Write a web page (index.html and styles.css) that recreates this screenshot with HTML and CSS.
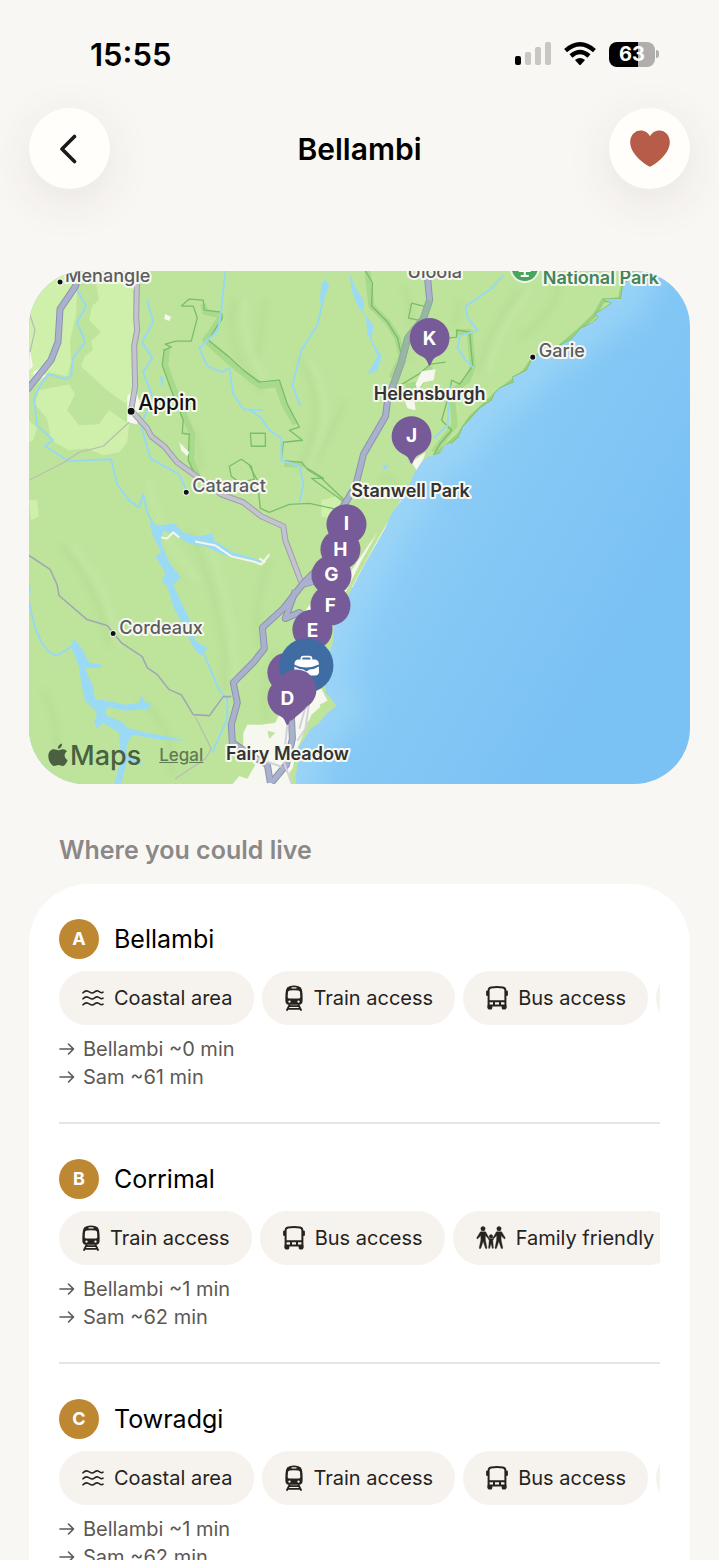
FILE: index.html
```html
<!DOCTYPE html>
<html lang="en">
<head>
    <meta charset="UTF-8">
    <meta name="viewport" content="width=device-width, initial-scale=1.0">
    <title>Bellambi</title>
    <link rel="stylesheet" href="styles.css">
</head>
<body>

    <svg class="sprite" aria-hidden="true">
        <symbol id="icon-waves" viewBox="0 0 22 18">
            <g fill="none" stroke="currentColor" stroke-width="1.6" stroke-linecap="round">
                <path d="M1 3.800 Q3.500 1.200 6 2.200 C8 3 9 4.600 11 3.800 C13 3 13.500 1.200 16 2 C18 2.800 19 4.800 21 3.200"/>
                <path d="M1 9.800 Q3.500 7.200 6 8.200 C8 9 9 10.600 11 9.800 C13 9 13.500 7.200 16 8 C18 8.800 19 10.800 21 9.200"/>
                <path d="M1 15.800 Q3.500 13.200 6 14.200 C8 15 9 16.600 11 15.800 C13 15 13.500 13.200 16 14 C18 14.800 19 16.800 21 15.200"/>
            </g>
        </symbol>
        <symbol id="icon-train" viewBox="0 0 18 26">
            <path fill="currentColor" fill-rule="evenodd" d="M4.5 1.200 Q9 -.2 13.500 1.200 Q16.500 2 17 5 Q17.800 9 17.600 16 Q17.500 19.600 14 19.800 H4 Q.5 19.600 .4 16 Q.2 9 1 5 Q1.500 2 4.500 1.200Z M6.500 2.200 V3.500 H11.500 V2.200Z M4.800 5.400 Q3.200 5.500 3 7 L2.700 12 Q2.700 13.400 4 13.400 H14 Q15.300 13.400 15.300 12 L15 7 Q14.800 5.500 13.200 5.400 Q9 4.900 4.800 5.400Z M4.500 15.400 A1.200 1.200 0 1 0 4.500 17.800 A1.200 1.200 0 1 0 4.500 15.400Z M13.500 15.400 A1.200 1.200 0 1 0 13.500 17.800 A1.200 1.200 0 1 0 13.500 15.400Z"/>
            <path fill="none" stroke="currentColor" stroke-width="1.8" stroke-linecap="round" d="M4.500 20 L2 25 M13.500 20 L16 25 M4 21.200 H14 M3 23.800 H15"/>
        </symbol>
        <symbol id="icon-bus" viewBox="0 0 22 24">
            <path fill="none" stroke="currentColor" stroke-width="2" d="M2.600 22 V4.500 Q2.600 1.800 5 1.400 Q11 .6 17 1.400 Q19.400 1.800 19.400 4.500 V22 M2.600 15.300 H19.400 M2.600 19.400 H19.400"/>
            <path fill="none" stroke="currentColor" stroke-width="2.2" stroke-linecap="round" d="M1.200 5.500 V9 M20.800 5.500 V9"/>
            <path fill="currentColor" d="M1.600 19 H6.300 V22 Q6.300 23.400 5 23.400 H3 Q1.600 23.400 1.600 22Z M20.400 19 H15.700 V22 Q15.700 23.400 17 23.400 H19 Q20.400 23.400 20.400 22Z M7 15.500 H9 V19 H7Z M13 15.500 H15 V19 H13Z"/>
        </symbol>
        <symbol id="icon-family" viewBox="0 0 30 24">
            <g fill="currentColor" stroke="currentColor" stroke-width=".4">
                <circle cx="7" cy="2.700" r="2.200"/>
                <circle cx="23" cy="2.700" r="2.200"/>
                <circle cx="15" cy="10.400" r="1.800"/>
                <path d="M4.400 5.800 H9.600 L12.600 11.200 L11.800 12 L9.300 9.400 L9.400 14 L11 22 Q10.600 23.300 9.500 22.300 L7.200 15.300 L4.800 22.300 Q3.600 23.200 3.200 22 L4.900 14 L4.800 9.600 L1.800 12.800 Q.6 13 .8 11.800Z"/>
                <path d="M25.600 5.800 H20.400 L17.400 11.200 L18.200 12 L20.700 9.400 L20.600 14 L19 22 Q19.400 23.300 20.500 22.300 L22.800 15.300 L25.200 22.300 Q26.400 23.200 26.800 22 L25.100 14 L25.200 9.600 L28.200 12.800 Q29.400 13 29.200 11.800Z"/>
                <path d="M12.400 11 L13.800 12.800 H16.200 L17.600 11 L18.200 11.800 L16.800 14.600 L17.400 22 Q16.900 23 16.300 22.200 L15 17.600 L13.700 22.200 Q13 23 12.600 22 L13.200 14.600 L11.800 11.800Z"/>
            </g>
        </symbol>
        <symbol id="icon-arrow" viewBox="0 0 16 14">
            <path fill="none" stroke="currentColor" stroke-width="1.6" stroke-linecap="round" stroke-linejoin="round" d="M1 7 H14.500 M9.500 2 L14.500 7 L9.500 12"/>
        </symbol>
        <symbol id="pin" viewBox="0 0 40 48" overflow="visible">
            <path d="M20 0 A20 20 0 0 1 27 38.700 Q23.500 40 21.200 46.400 Q20 48.400 18.800 46.400 Q16.500 40 13 38.700 A20 20 0 0 1 20 0Z"/>
        </symbol>
    </svg>

    <div class="screen">
        <div class="status-bar">
            <span class="time">15:55</span>
            <div class="status-icons">
                <svg class="signal" viewBox="0 0 36 24">
                    <rect x="0" y="14" width="6" height="9" rx="2"/>
                    <g fill="#c9c7c4">
                        <rect x="10" y="10" width="6" height="13" rx="2"/>
                        <rect x="20" y="5" width="6" height="18" rx="2"/>
                        <rect x="30" y="0" width="6" height="23" rx="2"/>
                    </g>
                </svg>
                <svg class="wifi" viewBox="0 0 32 24">
                    <g fill="none" stroke="#000" stroke-width="4.4">
                        <path d="M1.600 8.600 Q16 -4 30.400 8.600"/>
                        <path d="M7 14 Q16 6 25 14"/>
                    </g>
                    <path d="M11 18 Q16 14 21 18 L17 22.400 Q16 23.400 15 22.400Z"/>
                </svg>
                <div class="battery">
                    <span class="battery-level">63</span>
                    <span class="battery-cap"></span>
                </div>
            </div>
        </div>

        <header class="nav">
            <button class="round-btn" aria-label="Back">
                <svg class="chevron" viewBox="0 0 18 30"><path fill="none" stroke="#1a1a1a" stroke-width="3.6" stroke-linecap="round" stroke-linejoin="round" d="M15.500 2.500 L3 15 L15.500 27.500"/></svg>
            </button>
            <h1 class="nav-title">Bellambi</h1>
            <button class="round-btn" aria-label="Remove from favourites">
                <svg class="heart" viewBox="0 0 40 37"><path fill="#b65c48" d="M20 36.600 C18.500 36.600 .2 25.500 .2 12.200 C.2 5.200 4.800 .4 10.600 .4 C15 .4 18.200 2.800 20 6.200 C21.800 2.800 25 .4 29.400 .4 C35.200 .4 39.800 5.200 39.800 12.200 C39.800 25.500 21.500 36.600 20 36.600Z"/></svg>
            </button>
        </header>

        <main>
            <section class="map" aria-label="Map">
                <svg class="map-canvas" viewBox="30 271 660 512" preserveAspectRatio="xMidYMid slice">
                    <defs>
                        <linearGradient id="sea" gradientUnits="userSpaceOnUse" x1="400" y1="480" x2="640" y2="620">
                            <stop offset="0" stop-color="#90cff7"/>
                            <stop offset="0.4" stop-color="#84c8f5"/>
                            <stop offset="1" stop-color="#7ac1f4"/>
                        </linearGradient>
                        <filter id="soft" x="-20%" y="-20%" width="140%" height="140%"><feGaussianBlur stdDeviation="14"/></filter>
                        <filter id="relief" x="-20%" y="-20%" width="140%" height="140%"><feGaussianBlur stdDeviation="3"/></filter>
                        <path id="land" d="M20 260 H640 L634 275 L623 285 L621 299 L603 299 L612 303 L602 310 L595 314 L599 317 L592 323 L580 329 L572 339 L557 347 L542 352 L533 357 L527 370 L513 377 L514 382 L500 388 L495 393 L492 400 L480 408 L472 417 L463 427 L459 437 L452 443 L445 445 L440 453 L427 457 L420 465 L414 474 L408 489 L402 500 L392 513 L386 527 L377 543 L366 562 L353 587 L344 605 L335 622 L334 640 L328 660 L325 680 L326 692 L331 697 L337 705 L326 714 L320 722 L311 728 L304 740 L298 748 L299 760 L296 777 L298 790 H20Z"/>
                        <clipPath id="land-clip"><use href="#land"/></clipPath>
                    </defs>

                    <rect x="20" y="260" width="690" height="540" fill="url(#sea)"/>
                    <use href="#land" fill="none" stroke="#a2d8f7" stroke-width="44" opacity="0.65" filter="url(#soft)"/>
                    <use href="#land" fill="#bee49c"/>

                    <g clip-path="url(#land-clip)">
                        <!-- farmland -->
                        <g fill="#cff0aa">
                            <path d="M20 260 H84 L78 290 L77 315 L71 340 L72 362 L68 376 L50 372 L32 390 H20Z"/>
                            <path d="M96 278 L133 276 L136 360 L132 400 L126 403 L108 390 L95 378 L82 366 L86 356 L94 350 L92 341 L102 332 L90 320 L93 306 L100 300Z"/>
                            <path d="M40 390 L70 384 L76 394 L68 410 L80 425 L100 424 L110 410 L124 420 L130 424 L128 442 L120 452 L104 455 L88 448 L70 450 L52 440 L48 418 L36 404Z"/>
                            <path d="M30 420 L38 428 L34 440 L30 442Z"/>
                            <path d="M30 500 L38 500 L40 516 L32 520Z"/>
                            <path d="M322 500 L337 496 L345 508 L335 520 L322 516Z"/>
                        </g>

                        <!-- terrain relief -->
                        <g fill="none" stroke="#abd389" stroke-width="4" opacity="0.45" filter="url(#relief)">
                            <path d="M62 545 Q96 580 110 645 M190 530 Q230 620 225 690 M270 560 Q250 610 262 650 M140 700 Q176 720 172 776 M44 690 Q60 720 58 750"/>
                            <path d="M236 300 Q220 340 262 392 M300 360 Q332 410 298 470 M345 400 Q330 440 312 464 M404 286 Q420 330 408 360 M520 290 Q488 330 478 372 M560 280 Q555 315 520 338"/>
                            <path d="M184 420 Q205 440 200 470 M266 300 L258 356 M276 650 Q258 700 268 720 M460 300 L455 326 M380 480 Q400 470 395 500"/>
                        </g>
                        <g fill="none" stroke="#cdecae" stroke-width="4" opacity="0.5" filter="url(#relief)">
                            <path d="M72 545 Q106 580 120 645 M205 530 Q240 620 235 690 M246 300 Q240 340 272 392 M310 360 Q342 410 308 470 M530 290 Q498 330 488 372 M150 480 Q160 540 200 580"/>
                        </g>

                        <!-- national park borders -->
                        <g fill="none" stroke-linejoin="round">
                            <g stroke="#a9d98b" stroke-width="6">
                                <path d="M204 304 L206 312 L221 315 L220 320 L206 340 L228 360 L244 373 L260 384"/>
                                <path d="M168 349 L166 365 L175 390 L187 420 L193 434 L192 460 L198 475"/>
                                <path d="M250 378 L262 386 L278 384 L285 404 L296 424 M285 464 L304 464"/>
                                <path d="M368 271 L372 306 L388 322 L398 338 L402 356 L392 378 M431 366 L420 384 L406 386 M456 332 L470 332 L473 366 L468 380 L452 392 L455 425 L434 452"/>
                            </g>
                            <g stroke="#79bd6b" stroke-width="1.3">
                                <path d="M182 306 L190 299 L204 300 L205 310 L222 312 L223 318 L209 340 L230 357 L244 370 L260 382 L280 380 L288 404 L300 427 L290 430 L303 440 L284 442 L282 460 L302 462 L309 470 L322 478 L345 500 M182 306 L194 306 L198 318 L192 341 L177 341 L166 344 L172 347 L165 350"/>
                                <path d="M165 349 L163 365 L172 390 L184 420 L183 433 L190 434 L189 460 L196 475"/>
                                <path d="M250 465 L258 480 L261 508 L270 512 L290 504 L310 503 L342 510"/>
                                <path d="M366 271 L373 283 L372 306 L388 322 L398 338 L402 356 M412 303 L428 307 M412 303 L409 318 L424 321"/>
                                <path d="M448 338 L457 337 L457 330 L470 332 L473 366 L460 384 L452 380 L450 392 L442 420 L452 430 L440 444 L434 455 M396 388 L419 374 L431 364 L446 362"/>
                                <path d="M251 433 H266 V446 H252Z M230 466 L242 459 L252 466 L255 479 L240 482 L232 476Z"/>
                                <path d="M308 468 L324 478 L312 478 L345 502"/>
                            </g>
                            <path stroke="#9bd080" stroke-width="4" d="M635 271 L623 285 L620 299 L603 301 L595 315 L578 331 L557 349 L533 359 L524 372 L500 390 L470 418 L459 435 L436 455"/>
                            <path stroke="#72bd6a" stroke-width="1.2" d="M634 275 L623 285 L621 299 L603 299 L612 303 L602 310 L595 314 L599 317 L592 323 L580 329 L572 339 L557 347 L542 352 L533 357 L527 370 L513 377 L514 382 L500 388 L495 393 L492 400 L480 408 L472 417 L463 427 L459 437 L452 443 L440 453 L434 455"/>
                        </g>

                        <!-- towns -->
                        <g fill="#f6f7ef">
                            <path d="M128 396 L136 388 L140 400 L138 424 L128 422Z M129 282 H136 V292Z M31 350 L34 366 L30 370Z M34 372 L44 366 L46 376 L36 382Z M166 314 L172 317 L170 321 L165 319Z M180 442 L190 452 L188 456 L182 450Z"/>
                            <path d="M422 371 L436 369 L434 380 L424 382 L418 390 L416 384Z M404 398 L414 394 L416 410 L408 408Z M412 462 L426 452 L424 458 L417 470Z"/>
                            <path d="M378 532 L362 560 L346 592 L340 590 L352 570 L368 546Z M306 610 L312 602 L314 612Z"/>
                            <path d="M244 732 L248 724 L262 724 L276 722 L286 700 L322 688 L328 700 L312 714 L302 738 L296 752 L290 790 H228 L236 780 L250 764 L244 750Z"/>
                        </g>
                        <g fill="#bee49c">
                            <path d="M268 730 L276 732 L270 738Z M308 720 L314 724 L306 730Z M230 772 L244 754 L256 764 L248 778Z M290 772 L296 764 L294 782 L290 780Z"/>
                            <path d="M320 704 L328 700 L334 706 L324 712Z"/>
                        </g>

                        <!-- rivers and reservoirs -->
                        <g fill="none" stroke="#98d9f1" stroke-width="2" stroke-linejoin="round">
                            <path d="M78 290 L87 306 L78 322 L86 342 L74 358 L72 376 L66 379 L50 374 L42 384 L35 398 L38 425 L54 440 L46 446 L70 461 L112 459 L118 484 L130 500 L140 507 L144 494 L148 512 L154 524"/>
                            <path d="M148 300 L154 322 L143 342 L153 358 L144 372 L153 396 L142 425 L151 458 L180 474 L187 490"/>
                            <path d="M226 271 L222 310 L219 330 L200 348 L208 366 L222 372 L230 368 L234 394 L244 409 L264 410"/>
                            <path d="M326 290 L318 325 L302 350 L293 385 L301 406"/>
                            <path d="M250 409 L262 418 L270 430 L282 438 L282 460 L300 466 L304 484 L300 502"/>
                            <path d="M504 275 L490 290 L466 306 L468 318 L478 330 L460 336 L458 348 L466 360 L474 368 M434 438 L448 425 L450 385"/>
                            <path d="M30 600 Q38 650 58 655 L74 645 M204 652 L220 690 L228 698 L228 718 L213 752"/>
                        </g>
                        <g fill="#9bdaf4">
                            <path d="M150 522 L160 525 L175 523 L184 532 L198 536 L213 533 L215 540 L234 552 L262 560 L258 563 L226 555 L206 546 L190 543 L174 534 L164 530 L162 542 L170 562 L182 577 L174 584 L182 602 L190 618 L196 640 L208 648 L202 655 L196 650 L186 630 L174 606 L168 586 L163 582 L166 572 L156 556 L162 552 L154 536Z"/>
                            <path d="M75 638 L84 650 L90 662 L102 664 L102 667 L86 668 L94 686 L96 698 L108 700 L126 704 L140 702 L142 694 L146 702 L152 702 L150 708 L126 710 L108 706 L106 714 L124 722 L128 727 L148 732 L176 737 L186 740 L160 739 L134 734 L128 742 L127 752 L146 765 L128 760 L122 783 L115 783 L122 760 L120 732 L104 722 L98 728 L95 722 L98 712 L86 700 L82 682 L80 666 L72 646Z"/>
                            <path d="M332 271 L326 280 L330 286 L325 298 L320 304 L322 284Z M350 272 L356 288 L364 300 L364 312 L374 326 L372 340 L382 356 L378 370 L368 374 L378 356 L368 334 L366 316 L358 306 L352 290Z"/>
                            <path d="M382 466 L390 464 L386 470Z M30 575 L32 592 L30 594Z M160 374 L165 378 L163 388Z"/>
                        </g>
                        <path fill="none" stroke="#f6f5ea" stroke-width="2" d="M162 537 L168 538 L174 532 L180 537 M196 541 L216 545 L232 556 L254 561 L262 564 L270 554 M260 558 L266 562"/>
                        <path fill="none" stroke="#f3f3ec" stroke-width="1.6" d="M402 500 L386 527 L377 543 L353 587"/>
                    </g>

                    <!-- roads -->
                    <g fill="none" stroke-linejoin="round">
                        <g stroke="#b6bcb4" stroke-width="1.2">
                            <path d="M30 312 L36 330 L31 352 M30 480 L65 462 L80 452 L104 446 L130 422"/>
                            <path d="M196 716 L212 748 L206 758 L176 778"/>
                        </g>
                        <path stroke="#a2a7b4" stroke-width="1.6" d="M30 555 L51 569 L58 584 L60 595 L88 619 L108 625 L122 642 L143 656 L148 667 L158 674 L170 689 L182 694 L194 714 L210 715 L224 696 H232"/>
                        <path id="appin-road" stroke="#9c9eaf" stroke-width="6" d="M138 271 L137 318 L138 330 L135 346 L136 386 L132 410 L148 428 L152 436 L165 446 L178 462 L200 478 L222 494 L244 502 L262 516 L284 526 L286 540 L302 582"/>
                        <path stroke="#c4c4cf" stroke-width="4" d="M138 271 L137 318 L138 330 L135 346 L136 386 L132 410 L148 428 L152 436 L165 446 L178 462 L200 478 L222 494 L244 502 L262 516 L284 526 L286 540 L302 582"/>
                        <g stroke="#8b93b0" stroke-width="7">
                            <path d="M82 271 L76 287 L61 309 L59 342 L52 360 L28 390 M428 278 L430 300 L424 318 L408 338 L402 362 L388 400 L386 416 L364 454 L356 486 L340 512 L330 556 L303 584 L284 608 L263 627 L265 648 L254 662 L234 682 L238 702 L232 724 L233 742 L254 756 L268 764 L271 782"/>
                            <path d="M296 590 L286 618 L300 612 L310 620 M303 584 L318 580 M292 716 L293 738 L287 764 L272 782"/>
                        </g>
                        <g stroke="#aab1cc" stroke-width="5">
                            <path d="M82 271 L76 287 L61 309 L59 342 L52 360 L28 390 M428 278 L430 300 L424 318 L408 338 L402 362 L388 400 L386 416 L364 454 L356 486 L340 512 L330 556 L303 584 L284 608 L263 627 L265 648 L254 662 L234 682 L238 702 L232 724 L233 742 L254 756 L268 764 L271 782"/>
                            <path d="M296 590 L286 618 L300 612 L310 620 M303 584 L318 580 M292 716 L293 738 L287 764 L272 782"/>
                        </g>
                        <path stroke="#8fb892" stroke-width="7" opacity="0.7" d="M430 300 L424 318 L408 338 L402 362 L394 385"/>
                        <path stroke="#d3d2da" stroke-width="2" d="M300 728 L306 706 M288 724 L284 760 L292 782 M310 700 L306 728 L298 740 M254 756 L282 766"/>
                    </g>

                    <!-- place labels -->
                    <g class="label-dots">
                        <circle cx="61" cy="282" r="3"/>
                        <circle cx="132" cy="411" r="4"/>
                        <circle cx="187" cy="492" r="3"/>
                        <circle cx="114" cy="633" r="3"/>
                        <circle cx="533" cy="357" r="3"/>
                    </g>
                    <g class="label label-minor">
                        <text x="66" y="282">Menangle</text>
                        <text x="193" y="492">Cataract</text>
                        <text x="120" y="633">Cordeaux</text>
                        <text x="539" y="357">Garie</text>
                        <text x="408" y="278">Uloola</text>
                    </g>
                    <text class="label label-town" x="139" y="410">Appin</text>
                    <circle cx="525" cy="268" r="14" fill="#48a65a" stroke="#eef3ea" stroke-width="2"/>
                    <path d="M525 264 V276 M519 271 H531 M521 276 H529" stroke="#fff" stroke-width="2"/>
                    <text class="label label-park" x="543" y="284">National Park</text>

                    <g class="pins">
                        <use href="#pin" x="410" y="318" width="40" height="48"/>
                        <use href="#pin" x="392" y="416" width="40" height="48"/>
                        <circle cx="347" cy="524" r="20"/>
                        <circle cx="341" cy="549" r="20"/>
                        <circle cx="332" cy="575" r="20"/>
                        <circle cx="331" cy="605" r="20"/>
                        <circle cx="313" cy="629" r="20"/>
                        <circle cx="288" cy="672" r="20"/>
                    </g>
                    <circle cx="307" cy="665" r="27" fill="#3f6ca3"/>
                    <rect x="302" y="656" width="10" height="6" rx="2" fill="none" stroke="#fff" stroke-width="1.8"/>
                    <path fill="#fff" d="M298 659 H316 Q319.500 660 319.500 664 Q313 667 307 667 Q300 667 295 664 Q295 660 298 659Z M295 666 Q300 669 304 669 L307 671 L310 669 Q315 669 319.500 666 V672 Q319 675 316 675 H298 Q295 675 295 672Z"/>
                    <g class="pins">
                        <circle cx="297" cy="689" r="20"/>
                        <path d="M308 706 L292 720 L284 716Z"/>
                        <use href="#pin" x="268" y="677" width="40" height="48"/>
                    </g>
                    <g class="pin-letters">
                        <text x="430" y="345">K</text>
                        <text x="412" y="442">J</text>
                        <text x="347" y="530">I</text>
                        <text x="341" y="556">H</text>
                        <text x="332" y="581">G</text>
                        <text x="331" y="611">F</text>
                        <text x="313" y="636">E</text>
                        <text x="288" y="704">D</text>
                    </g>
                    <g class="label label-place">
                        <text x="430" y="400">Helensburgh</text>
                        <text x="411" y="497">Stanwell Park</text>
                        <text x="288" y="759">Fairy Meadow</text>
                    </g>
                </svg>
                <div class="map-credit">
                    <span class="map-brand">
                        <svg class="apple" viewBox="0 0 20 24"><path fill="currentColor" d="M14 .5 Q14.300 5 9.900 6 Q9.700 1.800 14 .5Z M10.200 7.300 C11.500 7.300 12.800 6.200 14.800 6.200 Q17.600 6.300 19 8.500 C15.500 10.700 16 15.500 19.700 17 C18.700 20 16.700 23 14.600 23 C13 23 12.400 22 10.400 22 C8.400 22 7.700 23 6.200 23 C3.500 23 .3 17.800 .3 13.300 C.3 8.800 3 6.300 5.900 6.300 C7.800 6.300 9 7.300 10.200 7.300Z"/></svg>Maps
                    </span>
                    <a class="map-legal" href="#legal">Legal</a>
                </div>
            </section>

            <h2 class="section-title">Where you could live</h2>

            <ul class="places">
                <li class="place">
                    <div class="place-head">
                        <span class="badge">A</span>
                        <h3 class="place-name">Bellambi</h3>
                    </div>
                    <ul class="chips">
                        <li class="chip"><svg class="icon-waves"><use href="#icon-waves"/></svg>Coastal area</li>
                        <li class="chip"><svg class="icon-train"><use href="#icon-train"/></svg>Train access</li>
                        <li class="chip"><svg class="icon-bus"><use href="#icon-bus"/></svg>Bus access</li>
                        <li class="chip"><svg class="icon-family"><use href="#icon-family"/></svg>Family friendly</li>
                    </ul>
                    <p class="trip"><svg class="arrow"><use href="#icon-arrow"/></svg>Bellambi ~0 min</p>
                    <p class="trip"><svg class="arrow"><use href="#icon-arrow"/></svg>Sam ~61 min</p>
                </li>
                <li class="place">
                    <div class="place-head">
                        <span class="badge">B</span>
                        <h3 class="place-name">Corrimal</h3>
                    </div>
                    <ul class="chips">
                        <li class="chip"><svg class="icon-train"><use href="#icon-train"/></svg>Train access</li>
                        <li class="chip"><svg class="icon-bus"><use href="#icon-bus"/></svg>Bus access</li>
                        <li class="chip"><svg class="icon-family"><use href="#icon-family"/></svg>Family friendly</li>
                    </ul>
                    <p class="trip"><svg class="arrow"><use href="#icon-arrow"/></svg>Bellambi ~1 min</p>
                    <p class="trip"><svg class="arrow"><use href="#icon-arrow"/></svg>Sam ~62 min</p>
                </li>
                <li class="place">
                    <div class="place-head">
                        <span class="badge">C</span>
                        <h3 class="place-name">Towradgi</h3>
                    </div>
                    <ul class="chips">
                        <li class="chip"><svg class="icon-waves"><use href="#icon-waves"/></svg>Coastal area</li>
                        <li class="chip"><svg class="icon-train"><use href="#icon-train"/></svg>Train access</li>
                        <li class="chip"><svg class="icon-bus"><use href="#icon-bus"/></svg>Bus access</li>
                        <li class="chip"><svg class="icon-family"><use href="#icon-family"/></svg>Family friendly</li>
                    </ul>
                    <p class="trip"><svg class="arrow"><use href="#icon-arrow"/></svg>Bellambi ~1 min</p>
                    <p class="trip"><svg class="arrow"><use href="#icon-arrow"/></svg>Sam ~62 min</p>
                </li>
            </ul>
        </main>
    </div>

</body>
</html>
```

FILE: styles.css
```css
* {
    margin: 0;
    padding: 0;
    box-sizing: border-box;
    font-family: Inter, sans-serif;
}
body {
    background: #f9f7f4;
    color: #000;
}
ul {
    list-style: none;
}
button {
    border: none;
    cursor: pointer;
}
.sprite {
    display: none;
}
.screen {
    height: 100vh;
    overflow: hidden auto;
    scrollbar-width: none;
    padding: 0 29px;
}

/* status bar */
.status-bar {
    display: flex;
    justify-content: space-between;
    align-items: center;
    height: 108px;
    padding: 0 31px 0 61px;
}
.time {
    font-size: 31px;
    font-weight: 600;
}
.status-icons {
    display: flex;
    align-items: center;
    gap: 13px;
}
.signal {
    width: 36px;
    height: 24px;
}
.wifi {
    width: 32px;
    height: 24px;
}
.battery {
    display: flex;
    align-items: center;
    gap: 1px;
}
.battery-level {
    width: 46px;
    height: 25px;
    border-radius: 8px;
    background: linear-gradient(90deg, #000 63%, #b0aeac 63%);
    color: #fff;
    font-size: 20px;
    font-weight: 700;
    line-height: 25px;
    text-align: center;
}
.battery-cap {
    width: 3px;
    height: 8px;
    border-radius: 0 3px 3px 0;
    background: #b0aeac;
}

/* top navigation */
.nav {
    display: flex;
    justify-content: space-between;
    align-items: center;
    margin-bottom: 82px;
}
.nav-title {
    font-size: 30px;
    font-weight: 600;
}
.round-btn {
    display: flex;
    justify-content: center;
    align-items: center;
    width: 81px;
    height: 81px;
    border-radius: 50%;
    background: #fffefb;
    box-shadow: 0 12px 50px rgba(60, 30, 20, 0.09);
}
.chevron {
    width: 18px;
    height: 30px;
    margin-right: 4px;
}
.heart {
    width: 40px;
    height: 37px;
}

/* map */
.map {
    position: relative;
    aspect-ratio: 660 / 512;
    border-radius: 56px;
    overflow: hidden;
}
.map-canvas {
    display: block;
    width: 100%;
    height: 100%;
}
.label {
    font-size: 18px;
    font-weight: 600;
    fill: #333;
    stroke: #f6f8f0;
    stroke-width: 4px;
    stroke-linejoin: round;
    paint-order: stroke;
}
.label-minor {
    font-weight: 500;
    fill: #5b5b60;
}
.label-town {
    font-size: 21px;
    font-weight: 500;
    fill: #111;
}
.label-park {
    fill: #43845a;
}
.label-place {
    text-anchor: middle;
}
.label-dots {
    fill: #111;
    stroke: #f6f8f0;
    stroke-width: 1px;
}
.pins {
    fill: #765b98;
}
.pin-letters {
    font-size: 19px;
    font-weight: 700;
    fill: #fff;
    text-anchor: middle;
}
.map-credit {
    position: absolute;
    left: 19px;
    bottom: 12px;
    display: flex;
    align-items: center;
    gap: 18px;
    color: #4a6040;
}
.map-brand {
    display: flex;
    align-items: center;
    gap: 2px;
    font-size: 27px;
    font-weight: 500;
}
.apple {
    width: 20px;
    height: 24px;
}
.map-legal {
    font-size: 17px;
    font-weight: 500;
    color: #617b54;
}

/* list of places */
.section-title {
    padding: 50px 30px 18px;
    font-size: 25px;
    font-weight: 600;
    line-height: 32px;
    color: #8a8888;
}
.places {
    padding: 0 30px;
    border-radius: 60px 60px 0 0;
    background: #fff;
}
.place {
    padding: 35px 0 31px;
    border-bottom: 2px solid #e6e6e6;
}
.place:last-child {
    border-bottom: none;
}
.place-head {
    display: flex;
    align-items: center;
    gap: 15px;
}
.badge {
    width: 40px;
    height: 40px;
    border-radius: 50%;
    background: #be8833;
    color: #fff;
    font-size: 18px;
    font-weight: 700;
    line-height: 40px;
    text-align: center;
}
.place-name {
    font-size: 25px;
    font-weight: 400;
}
.chips {
    display: flex;
    gap: 8px;
    margin: 12px 0 10px;
    overflow-x: auto;
    scrollbar-width: none;
}
.chip {
    display: flex;
    flex: none;
    align-items: center;
    gap: 10px;
    height: 54px;
    padding: 0 22px 0 23px;
    border-radius: 27px;
    background: #f6f3ee;
    color: #26231f;
    font-size: 20px;
}
.icon-waves {
    width: 22px;
    height: 18px;
}
.icon-train {
    width: 18px;
    height: 26px;
}
.icon-bus {
    width: 22px;
    height: 24px;
}
.icon-family {
    width: 30px;
    height: 24px;
}
.trip {
    display: flex;
    align-items: center;
    gap: 8px;
    font-size: 20px;
    line-height: 28px;
    color: #5b5855;
}
.arrow {
    width: 16px;
    height: 14px;
}
```
